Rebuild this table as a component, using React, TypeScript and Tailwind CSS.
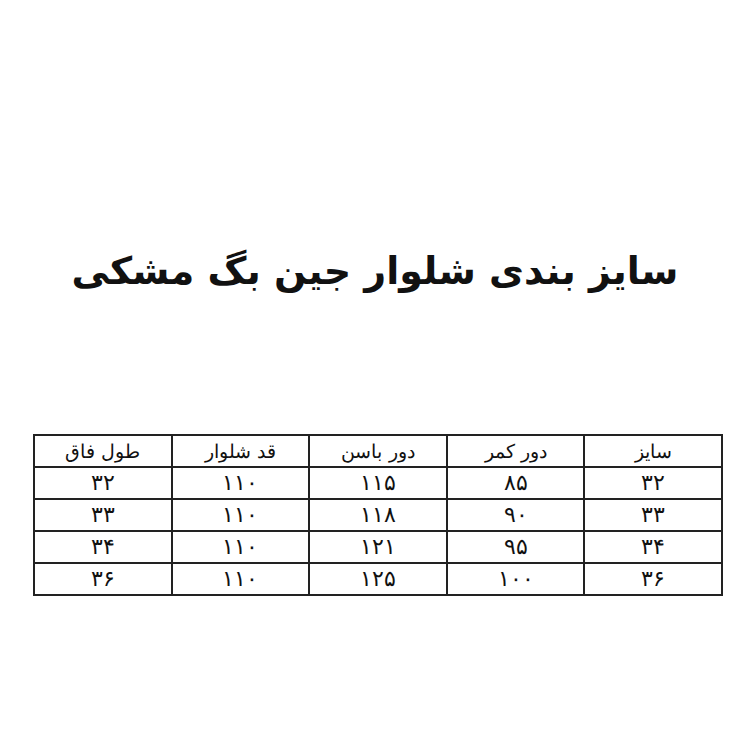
const headers = ["سایز", "دور کمر", "دور باسن", "قد شلوار", "طول فاق"];

const rows = [
  ["۳۲", "۸۵", "۱۱۵", "۱۱۰", "۳۲"],
  ["۳۳", "۹۰", "۱۱۸", "۱۱۰", "۳۳"],
  ["۳۴", "۹۵", "۱۲۱", "۱۱۰", "۳۴"],
  ["۳۶", "۱۰۰", "۱۲۵", "۱۱۰", "۳۶"],
];

export default function App() {
  return (
    <div
      dir="rtl"
      className="w-[750px] h-[750px] bg-white text-[#111] overflow-hidden"
      style={{ fontFamily: '"DejaVu Sans", "Noto Sans", sans-serif' }}
    >
      <h1 className="pt-[246px] text-center text-[38px] font-bold leading-[50px]">
        سایز بندی شلوار جین بگ مشکی
      </h1>

      <table className="mt-[138px] mr-[27px] w-[690px] border-collapse border-2 border-[#222] table-fixed">
        <thead>
          <tr>
            {headers.map((h) => (
              <th
                key={h}
                className="h-[32px] border-2 border-[#222] text-center text-[19px] font-extralight leading-none"
              >
                {h}
              </th>
            ))}
          </tr>
        </thead>
        <tbody>
          {rows.map((r, i) => (
            <tr key={i}>
              {r.map((c, j) => (
                <td
                  key={j}
                  className="h-[32px] border-2 border-[#222] text-center text-[22px] font-extralight leading-none"
                >
                  {c}
                </td>
              ))}
            </tr>
          ))}
        </tbody>
      </table>
    </div>
  );
}
